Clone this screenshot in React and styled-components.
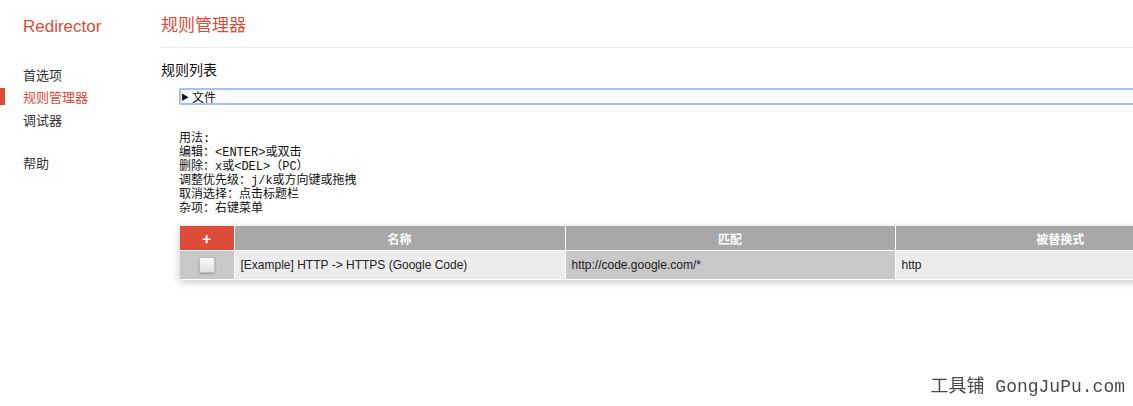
import React from 'react'
import styled, { createGlobalStyle } from 'styled-components'

const GlobalStyle = createGlobalStyle`
    html, body {
        margin: 0;
        padding: 0;
        overflow: hidden;
        background: #fff;
    }
    body {
        font-family: "Liberation Sans", "Noto Sans CJK SC", sans-serif;
        color: #222;
    }
`

const Page = styled.div`
    display: flex;
    width: 1133px;
    height: 406px;
    overflow: hidden;
`

const Sidebar = styled.div`
    flex: 0 0 161px;
    display: flex;
    flex-direction: column;
`

const Brand = styled.div`
    padding: 17px 0 0 23px;
    height: 30px;
    font-size: 17px;
    line-height: 20px;
    color: #dd4b39;
`

const NavList = styled.div`
    display: flex;
    flex-direction: column;
    margin-top: 13px;
`

const NavItem = styled.div`
    height: 17px;
    line-height: 17px;
    margin: ${props => props.$gap ? '26px' : '5.5px'} 0 0;
    padding-left: ${props => props.$active ? '18px' : '23px'};
    border-left: ${props => props.$active ? '5px solid #dd4b39' : 'none'};
    font-size: 13px;
    color: ${props => props.$active ? '#dd4b39' : '#333'};
    font-family: "Noto Sans CJK SC", sans-serif;
`

const Main = styled.div`
    flex: 1;
    min-width: 0;
    display: flex;
    flex-direction: column;
    overflow: hidden;
`

const Title = styled.div`
    padding-top: 13px;
    height: 34px;
    line-height: 22px;
    font-size: 17px;
    color: #dd4b39;
    border-bottom: 1px solid #eeeeee;
    font-family: "Noto Sans CJK SC", sans-serif;
`

const SectionTitle = styled.div`
    margin-top: 11px;
    font-size: 14px;
    line-height: 20px;
    color: #111;
    font-family: "Noto Sans CJK SC", sans-serif;
`

const Files = styled.div`
    flex: 0 0 auto;
    margin: 9px -20px 0 18px;
    height: 13px;
    border: 2px solid #a6c1eb;
    border-right: none;
    border-radius: 2px 0 0 2px;
    display: flex;
    align-items: center;
    font-size: 12px;
    color: #111;
    font-family: "Noto Sans CJK SC", sans-serif;
`

const Arrow = styled.span`
    font-size: 8px;
    margin-right: 3px;
`

const Usage = styled.pre`
    margin: 27px 0 0 18px;
    font-family: "Liberation Mono", "Noto Sans CJK SC", monospace;
    font-size: 12px;
    line-height: 14px;
    color: #111;
`

const TableWrap = styled.div`
    flex: 0 0 auto;
    margin: 10px 0 0 19px;
    width: 1045px;
    box-shadow: 0 2px 8px rgba(0, 0, 0, 0.22);
    border-bottom: 1px solid #fff;
`

const Table = styled.table`
    border-collapse: collapse;
    table-layout: fixed;
    width: 100%;
    font-size: 12px;
`

const Head = styled.th`
    height: 24px;
    padding: 0;
    background: ${props => props.$add ? '#dd4b39' : '#a8a8a8'};
    color: #fff;
    font-weight: bold;
    font-size: ${props => props.$add ? '15px' : '12px'};
    text-align: center;
    border-left: 1px solid #fff;
    font-family: "Noto Sans CJK SC", sans-serif;
    &:first-child {
        border-left: none;
    }
`

const Cell = styled.td`
    height: 28px;
    padding: 0 0 0 ${props => props.$box ? '0' : '6px'};
    background: ${props => props.$dark ? '#c8c8c8' : '#ececec'};
    border-left: 1px solid #fff;
    border-top: 1px solid #fff;
    text-align: ${props => props.$box ? 'center' : 'left'};
    color: #222;
    &:first-child {
        border-left: none;
    }
`

const Checkbox = styled.span`
    display: inline-block;
    width: 14px;
    height: 14px;
    vertical-align: middle;
    border: 1px solid #bdbdbd;
    border-radius: 2px;
    background: linear-gradient(#fafafa, #e2e2e2);
    box-shadow: 0 1px 2px rgba(0, 0, 0, 0.25);
`

const Watermark = styled.div`
    position: fixed;
    right: 8px;
    bottom: 9px;
    font-family: "Liberation Mono", "Noto Sans CJK SC", monospace;
    font-size: 18px;
    color: #4a4a4a;
`

const usage = [
    '用法:',
    '编辑：<ENTER>或双击',
    '删除：x或<DEL>（PC）',
    '调整优先级：j/k或方向键或拖拽',
    '取消选择：点击标题栏',
    '杂项：右键菜单'
]

export default function App() {
    return (
        <>
            <GlobalStyle />
            <Page>
                <Sidebar>
                    <Brand>Redirector</Brand>
                    <NavList>
                        <NavItem>首选项</NavItem>
                        <NavItem $active>规则管理器</NavItem>
                        <NavItem>调试器</NavItem>
                        <NavItem $gap>帮助</NavItem>
                    </NavList>
                </Sidebar>
                <Main>
                    <Title>规则管理器</Title>
                    <SectionTitle>规则列表</SectionTitle>
                    <Files><Arrow>▶</Arrow>文件</Files>
                    <Usage>{usage.join('\n')}</Usage>
                    <TableWrap>
                        <Table>
                            <colgroup>
                                <col style={{ width: 54 }} />
                                <col style={{ width: 331 }} />
                                <col style={{ width: 330 }} />
                                <col style={{ width: 330 }} />
                            </colgroup>
                            <thead>
                                <tr>
                                    <Head $add>+</Head>
                                    <Head>名称</Head>
                                    <Head>匹配</Head>
                                    <Head>被替换式</Head>
                                </tr>
                            </thead>
                            <tbody>
                                <tr>
                                    <Cell $dark $box><Checkbox /></Cell>
                                    <Cell>[Example] HTTP -&gt; HTTPS (Google Code)</Cell>
                                    <Cell $dark>http://code.google.com/*</Cell>
                                    <Cell>http</Cell>
                                </tr>
                            </tbody>
                        </Table>
                    </TableWrap>
                </Main>
            </Page>
            <Watermark>工具铺 GongJuPu.com</Watermark>
        </>
    )
}
